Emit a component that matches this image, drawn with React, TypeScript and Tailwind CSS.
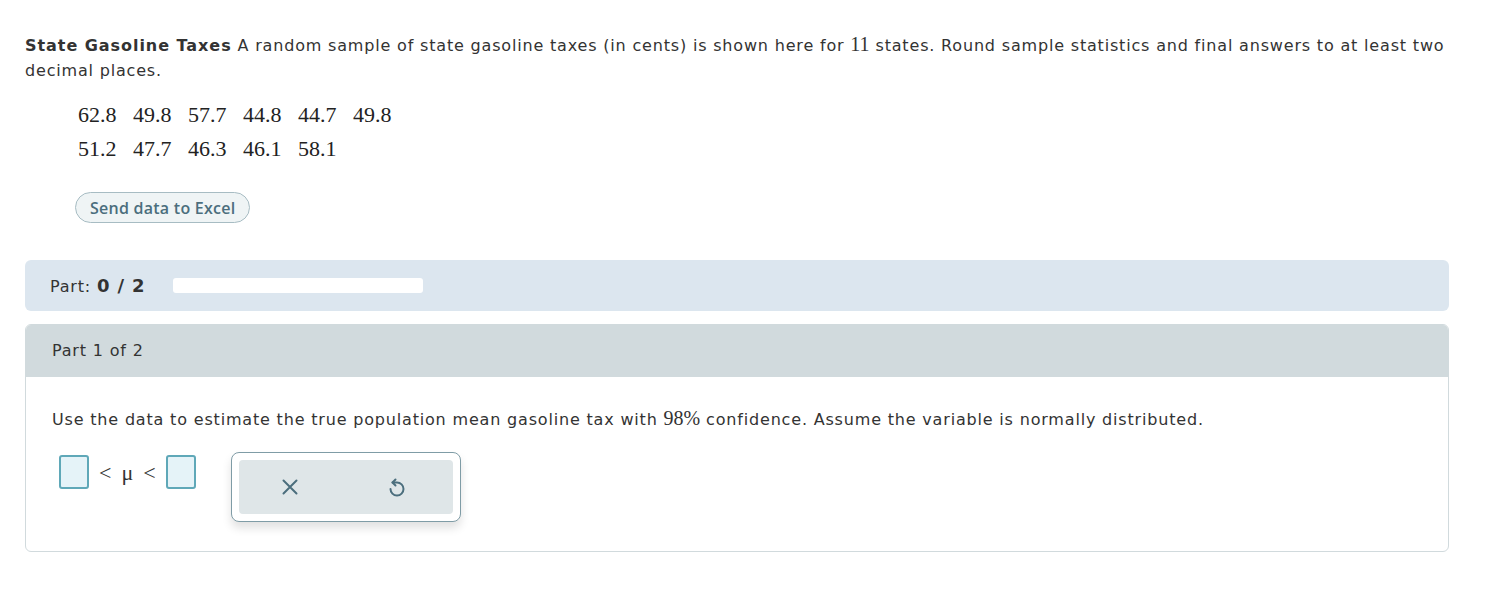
const rows = [
  ['62.8', '49.8', '57.7', '44.8', '44.7', '49.8'],
  ['51.2', '47.7', '46.3', '46.1', '58.1'],
];

function AnswerBox() {
  return <span className="inline-block w-[30px] h-[34px] rounded-[3px] border-2 border-[#5fa8b8] bg-[#e5f3f8]" />;
}

function UndoIcon() {
  return (
    <svg width="24" height="24" viewBox="0 0 24 24" fill="none" stroke="currentColor" strokeWidth="2" strokeLinecap="round" strokeLinejoin="round">
      <path d="M10.5 4.5 L7.5 7.5 L10.5 10.5" />
      <path d="M7.5 7.5 H12 A6.5 6.5 0 1 1 5.5 14" />
    </svg>
  );
}

function CloseIcon() {
  return (
    <svg width="16" height="16" viewBox="0 0 16 16" fill="none" stroke="currentColor" strokeWidth="2" strokeLinecap="round">
      <path d="M1.5 1.5 L14.5 14.5 M14.5 1.5 L1.5 14.5" />
    </svg>
  );
}

export default function App() {
  return (
    <div className="min-h-screen bg-white text-[#333] pl-[25px] pr-[38px] pt-[33px] font-['DejaVu_Sans',Verdana,sans-serif] text-[16px] tracking-[0.82px]">
      <p className="leading-[25px]">
        <span className="font-bold tracking-[0.95px]">State Gasoline Taxes</span> A random sample of state gasoline taxes (in cents) is shown here for{' '}
        <span className="font-['Liberation_Serif',serif] text-[20px] leading-none tracking-normal">11</span> states. Round sample statistics and final answers to at least two decimal places.
      </p>

      <table className="ml-[53px] mt-[14px] font-['Liberation_Serif',serif] text-[22px] text-[#222] tracking-normal">
        <tbody>
          {rows.map((row, i) => (
            <tr key={i} className="h-[34px]">
              {row.map((v, j) => (
                <td key={j} className="w-[55px] p-0">{v}</td>
              ))}
            </tr>
          ))}
        </tbody>
      </table>

      <button className="ml-[50px] mt-[27px] h-[31px] px-[14px] rounded-full border border-[#a7bcc3] bg-[#eff4f5] text-[#4b6e7d] text-[16px] font-semibold tracking-[0.25px] font-['Open_Sans',sans-serif]">
        Send data to Excel
      </button>

      <div className="mt-[37px] h-[51px] rounded-[6px] bg-[#dce6ef] flex items-center px-[25px]">
        <span>
          Part: <span className="font-bold text-[18px]">0 / 2</span>
        </span>
        <div className="ml-[28px] w-[250px] h-[15px] rounded-[3px] bg-white" />
      </div>

      <div className="mt-[13px] rounded-[6px] border border-[#d1dadd] overflow-hidden">
        <div className="h-[52px] bg-[#d1dadd] flex items-center px-[26px]">Part 1 of 2</div>
        <div className="px-[26px] pt-[30px] pb-[29px]">
          <p className="leading-[25px]">
            Use the data to estimate the true population mean gasoline tax with{' '}
            <span className="font-['Liberation_Serif',serif] text-[20px] leading-none tracking-normal">98%</span> confidence. Assume the variable is normally distributed.
          </p>
          <div className="mt-[20px] flex items-start">
            <div className="flex items-center gap-[10px] ml-[7px] mt-[3px] font-['Liberation_Serif',serif] text-[22px] text-[#333] tracking-normal">
              <AnswerBox />
              <span>&lt;</span>
              <span>μ</span>
              <span>&lt;</span>
              <AnswerBox />
            </div>
            <div className="ml-[35px] w-[230px] h-[70px] rounded-[8px] border border-[#7f9ca6] bg-white p-[7px] shadow-[0_6px_10px_rgba(0,0,0,0.12)]">
              <div className="h-full rounded-[4px] bg-[#dfe6e8] flex items-center justify-around text-[#4b6e7d]">
                <CloseIcon />
                <UndoIcon />
              </div>
            </div>
          </div>
        </div>
      </div>
    </div>
  );
}
